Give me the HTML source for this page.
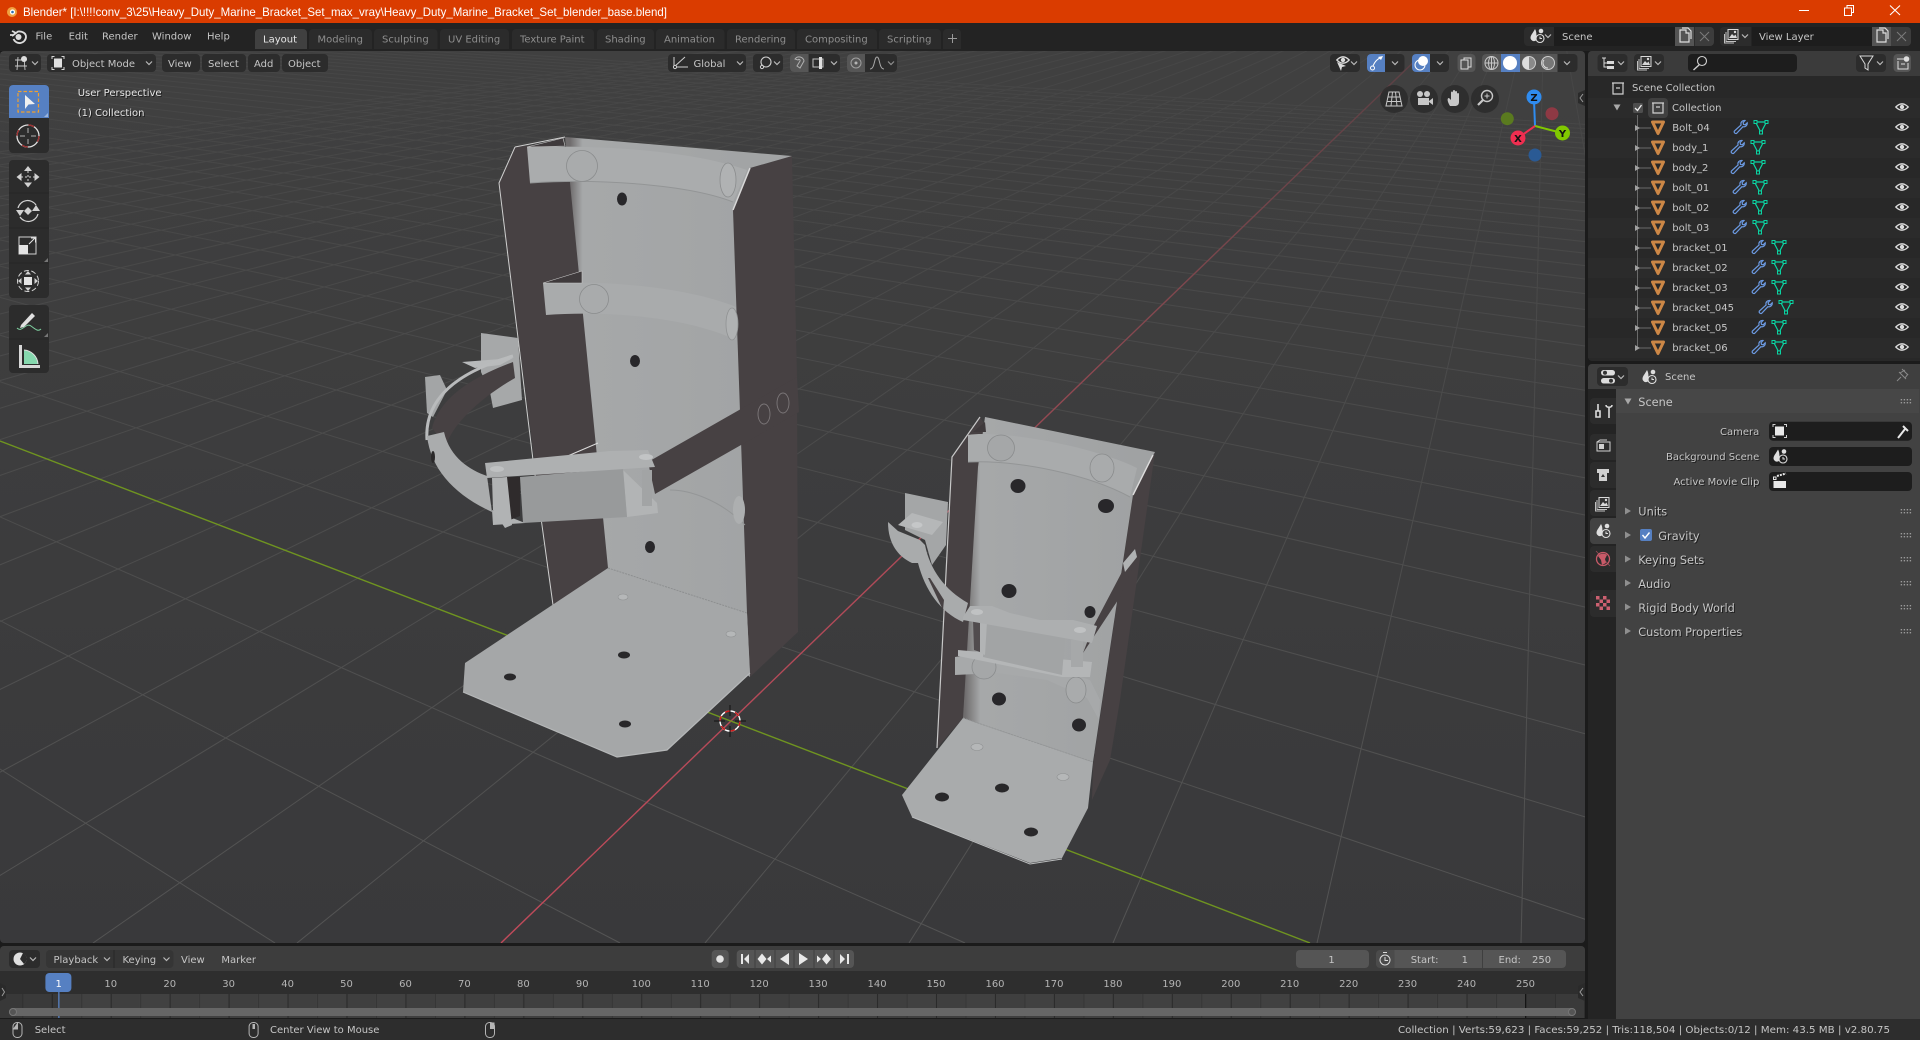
<!DOCTYPE html>
<html><head><meta charset="utf-8"><title>Blender</title>
<style>
html,body{margin:0;padding:0;background:#1b1b1b;width:1920px;height:1040px;overflow:hidden}
svg{display:block;position:absolute;left:0;top:0}
text{font-family:"DejaVu Sans","Liberation Sans",sans-serif;font-size:10px;fill:#c6c6c6;white-space:pre}
.d{fill:#8e8e8e}.w{fill:#e6e6e6}.s{filter:drop-shadow(1px 1px 0 rgba(0,0,0,.55))}.e{text-anchor:end}.m{text-anchor:middle}
.p{font-size:11.3px}
.n{fill:#b4b4b4;text-anchor:middle}
.b{fill:#2c2c2c}
</style></head><body>
<svg width="1920" height="1040" viewBox="0 0 1920 1040" xmlns="http://www.w3.org/2000/svg">
<defs>
<linearGradient id="vb" x1="0" y1="51" x2="0" y2="943" gradientUnits="userSpaceOnUse"><stop offset="0" stop-color="#404040"/><stop offset="1" stop-color="#39393b"/></linearGradient>
<linearGradient id="gl" x1="0" y1="51" x2="0" y2="943" gradientUnits="userSpaceOnUse"><stop offset="0" stop-color="#464646"/><stop offset=".5" stop-color="#4c4c4c"/><stop offset="1" stop-color="#545454"/></linearGradient>
<linearGradient id="rd" x1="1423" y1="53" x2="501" y2="943" gradientUnits="userSpaceOnUse"><stop offset="0" stop-color="#5a4044"/><stop offset=".3" stop-color="#84484f"/><stop offset=".6" stop-color="#b04a58"/><stop offset="1" stop-color="#c04a5a"/></linearGradient>
<linearGradient id="bp" x1="570" y1="0" x2="750" y2="0" gradientUnits="userSpaceOnUse"><stop offset="0" stop-color="#6f6c6d"/><stop offset=".07" stop-color="#a6a8a9"/><stop offset="1" stop-color="#a2a4a5"/></linearGradient>
<linearGradient id="bp2" x1="965" y1="0" x2="1135" y2="0" gradientUnits="userSpaceOnUse"><stop offset="0" stop-color="#6f6c6d"/><stop offset=".09" stop-color="#a6a8a9"/><stop offset="1" stop-color="#a0a2a3"/></linearGradient>
<clipPath id="vc"><rect x="0" y="51" width="1585" height="892" rx="4"/></clipPath>
<pattern id="tk" x="51.75" y="0" width="58.95" height="40" patternUnits="userSpaceOnUse"><rect width="58.95" height="40" fill="#3f3f3f"/><rect x="29" width="29.5" height="40" fill="#414141"/><rect x="0" width="1" height="40" fill="#2a2a2a"/><rect x="29.5" width="1" height="40" fill="#353535"/></pattern>
<g id="ob"><path d="M-5.5 -5.5H5.5L0 6Z" fill="none" stroke="#cc8746" stroke-width="3" stroke-linejoin="round"/></g>
<g id="wr"><path d="M5 -6.5a3.4 3.4 0 0 0 -3.9 4.4L-5.6 4a1.7 1.7 0 0 0 2.3 2.3L2.9 -0.3a3.4 3.4 0 0 0 4.3 -3.9L5.2 -2.2L3.500 -2.6L3.1 -4.4Z" fill="none" stroke="#6c9ae2" stroke-width="1.2"/></g>
<g id="tr"><path d="M-5.5 -5H5.5L0 5.5Z" fill="none" stroke="#0ad6a4" stroke-width="1.2"/><rect x="-7" y="-6.5" width="3" height="3" fill="#282828" stroke="#0ad6a4"/><rect x="4" y="-6.5" width="3" height="3" fill="#282828" stroke="#0ad6a4"/><rect x="-1.5" y="4" width="3" height="3" fill="#282828" stroke="#0ad6a4"/></g>
<g id="ey"><path d="M-6.2 0Q0 -6.4 6.2 0Q0 6.4 -6.2 0Z" fill="none" stroke="#dcdcdc" stroke-width="1.3"/><circle r="2.2" fill="#dcdcdc"/></g>
<path id="ch" d="M-3 -1.5L0 1.5L3 -1.5" fill="none" stroke="#b9b9b9" stroke-width="1.2"/>
<path id="ar" d="M-3 -3.5L3 0L-3 3.5Z" fill="#8f8f8f"/>
<path id="ad" d="M-3.5 -2.5H3.5L0 3.5Z" fill="#a8a8a8"/>
<g id="gr" fill="#9a9a9a"><rect x="0" y="-2" width="1.4" height="1.4"/><rect x="3" y="-2" width="1.4" height="1.4"/><rect x="6" y="-2" width="1.4" height="1.4"/><rect x="9" y="-2" width="1.4" height="1.4"/><rect x="0" y="1" width="1.4" height="1.4"/><rect x="3" y="1" width="1.4" height="1.4"/><rect x="6" y="1" width="1.4" height="1.4"/><rect x="9" y="1" width="1.4" height="1.4"/></g>
<g id="sc"><path d="M-2 -7C-4 -3 -6.5 -1 -6.5 2A3.5 3.5 0 0 0 -1 4.5C-0.6 1 0 -4 -2 -7Z" fill="#dedede"/><circle cx="4" cy="-5" r="2.3" fill="#dedede"/><circle cx="3" cy="2.5" r="4" fill="none" stroke="#dedede" stroke-width="1.1"/><path d="M3 0.5V2.5H5" fill="none" stroke="#dedede"/></g>
<g id="vl"><rect x="-5" y="-6.5" width="10" height="10" fill="#333" stroke="#d8d8d8"/><path d="M-4 2L-1 -2L1 0L2.5 -1.5L4 2Z" fill="#d8d8d8"/><circle cx="2" cy="-4" r="1.2" fill="#d8d8d8"/><path d="M-7 -4V5.500H3M-8.500 -2V7H1" fill="none" stroke="#c0c0c0"/></g>
<g id="cp"><path d="M-4 -6H2V-3H5V6H-4Z" fill="none" stroke="#dedede" stroke-width="1.2"/><path d="M-2 -8H4L7 -5V3" fill="none" stroke="#dedede" stroke-width="1.2"/></g>
<g id="ms"><rect x="-4.500" y="-7.500" width="9" height="15" rx="4" fill="none" stroke="#b5b5b5"/></g>
</defs>

<rect width="1920" height="1040" fill="#1b1b1b"/>
<rect y="23" width="1920" height="28" fill="#232323"/>

<!-- VIEWPORT -->
<g clip-path="url(#vc)">
<rect x="0" y="51" width="1585" height="892" fill="url(#vb)"/>
<path fill="none" stroke="url(#gl)" stroke-width="1" d="M1546 -66L1929 943M1546 -66L1725 943M1546 -66L1521 943M1546 -66L1317 943M1546 -66L1113 943M1546 -66L909 943M1546 -66L705 943M1546 -66L297 943M1546 -66L93 943M1546 -66L-111 943M1546 -66L-315 943M1546 -66L-519 943M1546 -66L-723 943M1546 -66L-927 943M1546 -66L-1131 943M1546 -66L-1335 943M1546 -66L-1539 943M1546 -66L-1743 943M1546 -66L-1947 943M1546 -66L-2151 943M1546 -66L-2355 943M1546 -66L-2559 943M1546 -66L-2763 943M1546 -66L-2967 943M1546 -66L-3171 943M1546 -66L-3375 943M1546 -66L-3579 943M1546 -66L-3783 943M1546 -66L-3987 943M1546 -66L-4191 943M1546 -66L-4395 943M1546 -66L-4599 943M1546 -66L-4803 943M1546 -66L-5007 943M1546 -66L-5211 943M1546 -66L-5415 943M1546 -66L-5619 943
M-1320 -66L275 943M-1320 -66L620 943M-1320 -66L965 943M-1320 -66L1655 943M-1320 -66L2000 943M-1320 -66L2345 943M-1320 -66L2690 943M-1320 -66L3035 943M-1320 -66L3380 943M-1320 -66L3725 943M-1320 -66L4070 943M-1320 -66L4415 943M-1320 -66L4760 943M-1320 -66L5105 943M-1320 -66L5450 943M-1320 -66L5795 943M-1320 -66L6140 943M-1320 -66L6485 943M-1320 -66L6830 943M-1320 -66L7175 943M-1320 -66L7520 943M-1320 -66L7865 943M-1320 -66L8210 943M-1320 -66L8555 943M-1320 -66L8900 943M-1320 -66L9245 943M-1320 -66L9590 943M-1320 -66L9935 943M-1320 -66L10280 943M-1320 -66L10625 943M-1320 -66L10970 943M-1320 -66L11315 943M-1320 -66L11660 943M-1320 -66L12005 943M-1320 -66L12350 943M-1320 -66L12695 943M-1320 -66L13040 943M-1320 -66L13385 943M-1320 -66L13730 943M-1320 -66L14075 943"/>
<path d="M1423 53L501 943" stroke="url(#rd)" stroke-width="1.4" fill="none"/>
<path d="M0 441L1310 943" stroke="#6f9420" stroke-width="1.4" fill="none"/>

<!-- BRACKET 1 -->
<g>
<polygon points="792,156 750,168 733,210 747,613 750,677 798,632 797,377" fill="#474143"/>
<polygon points="515,147 499,183 553,605 608,568 570,183 535,145" fill="#474143"/>
<polygon points="565,137 792,156 750,168 733,210 747,613 750,677 608,568 570,183" fill="url(#bp)"/>
<path d="M515 147L499 183L533 460L553 605" fill="none" stroke="#cfcfcf" stroke-width="1"/>
<path d="M515 147L565 137" fill="none" stroke="#cfcfcf" stroke-width="1"/>
<path d="M750 168L733 210" fill="none" stroke="#d8d8d8" stroke-width="1.5"/>
<polygon points="608,568 747,613 750,673 667,750 617,757 463,692 465,663" fill="#a5a7a8"/>
<path d="M463 692L617 757L667 750L750 673" fill="none" stroke="#b5b7b8" stroke-width="1.2"/>
<path d="M608 568L747 613" fill="none" stroke="#8d8f90" stroke-width="1" stroke-dasharray="2 1"/>
<ellipse cx="510" cy="677" rx="6" ry="3.5" fill="#29282a"/><ellipse cx="624" cy="655" rx="6" ry="3.5" fill="#29282a"/><ellipse cx="625" cy="724" rx="6" ry="3.5" fill="#29282a"/>
<ellipse cx="623" cy="597" rx="5" ry="3" fill="#b5b7b8" stroke="#8f9192" stroke-width=".6"/><ellipse cx="731" cy="634" rx="5" ry="3" fill="#b5b7b8" stroke="#8f9192" stroke-width=".6"/>
<ellipse cx="622" cy="199" rx="5" ry="6.5" fill="#28272a"/><ellipse cx="635" cy="361" rx="5" ry="6" fill="#28272a"/><ellipse cx="650" cy="547" rx="5" ry="6" fill="#28272a"/>
<path d="M527 147C600 145 690 150 747 170L733 202C690 185 600 178 530 183Z" fill="#aaacad"/>
<path d="M527 147L563 138L565 146Z" fill="#3f3a3c" stroke="#c8c8c8" stroke-width=".6"/>
<path d="M530 183C600 178 690 185 733 202" fill="none" stroke="#939596"/>
<ellipse cx="582" cy="166" rx="15.5" ry="15.5" fill="#a9abac" stroke="#8a8c8d" stroke-width=".8"/>
<ellipse cx="728" cy="180" rx="8" ry="17" fill="#b0b2b3" stroke="#8a8c8d" stroke-width=".8"/>
<path d="M543 283C610 280 690 288 736 307L736 340C690 318 610 310 546 315Z" fill="#a9abac"/>
<path d="M543 283L582 271L582 283Z" fill="#3f3a3c" stroke="#c8c8c8" stroke-width=".6"/>
<ellipse cx="594" cy="299" rx="14.5" ry="14.5" fill="#a9abac" stroke="#8a8c8d" stroke-width=".8"/>
<ellipse cx="732" cy="324" rx="6" ry="16" fill="#b0b2b3" stroke="#909293" stroke-width=".8"/>
<path d="M670 490C690 490 720 500 745 525" fill="none" stroke="#949697"/>
<ellipse cx="739" cy="510" rx="6" ry="14" fill="#adafb0"/>
<path d="M563 458L598 443" stroke="#dcdcdc" fill="none"/>
<polygon points="797,377 799,412 655,494 648,462" fill="#474143"/>
<ellipse cx="764" cy="414" rx="6" ry="10" fill="#474143" stroke="#7c7779" stroke-width=".9"/>
<ellipse cx="783" cy="403" rx="6" ry="10" fill="#474143" stroke="#7c7779" stroke-width=".9"/>
<polygon points="481,333 518,338 522,400 493,408 490,392 481,372" fill="#a6a8a9"/>
<path d="M462 362L513 358L500 365L475 368Z" fill="#b8babb"/>
<circle cx="500" cy="375" r="6.5" fill="#a6a8a9" stroke="#86888a" stroke-width=".8"/>
<path d="M425 377L440 375L447 390L433 417L427 413Z" fill="#a3a5a6"/>
<path d="M513 362C470 378 440 398 432 428L446 446C452 425 480 398 515 378Z" fill="#474143"/>
<path d="M513 356C458 372 424 398 427 440" fill="none" stroke="#b9bbbc" stroke-width="3"/>
<path d="M427 436C431 470 455 495 492 512L487 476C470 470 450 458 444 432Z" fill="#aaacad"/>
<ellipse cx="433" cy="457" rx="2" ry="6" fill="#2a2829"/>
<polygon points="492,510 525,523 493,525" fill="#b0b2b3"/>
<polygon points="623,470 657,503 658,513 627,517" fill="#b2b4b5"/>
<rect x="642" y="470" width="10" height="36" fill="#a2a4a5"/>
<polygon points="520,477 623,468 627,517 523,523" fill="#989a9b"/>
<polygon points="507,477 520,477 520,516 510,520" fill="#2f2b2c"/>
<polygon points="492,478 507,477 512,525 505,528 493,510" fill="#b1b3b4"/>
<polygon points="485,463 610,451 648,450 655,467 487,478" fill="#aeb0b1"/>
<ellipse cx="497" cy="469" rx="7" ry="3" fill="#bfc1c2"/>
<ellipse cx="646" cy="457" rx="7" ry="3" fill="#c2c4c5"/>
</g>

<!-- BRACKET 2 -->
<g>
<polygon points="1155,452 1133,495 1093,765 1092,800 1110,760 1120,700" fill="#474143"/>
<polygon points="980,417 952,457 937,748 963,718 978,467 985,425" fill="#474143"/>
<polygon points="985,417 1155,452 1133,495 1093,762 963,718 978,467" fill="url(#bp2)"/>
<path d="M980 417L952 457L937 748" fill="none" stroke="#c8c8c8" stroke-width="1.2"/>
<path d="M1153 455L1133 495" stroke="#dcdcdc" fill="none" stroke-width="1.4"/>
<polygon points="963,718 1093,762 1088,808 1062,858 1030,863 912,817 902,795" fill="#a9abac"/>
<path d="M912 817L1030 864L1062 859" fill="none" stroke="#babcbd" stroke-width="1"/>
<path d="M963 718L1093 762" stroke="#949697" fill="none" stroke-dasharray="2 1"/>
<ellipse cx="1018" cy="486" rx="7.5" ry="7" fill="#28272a"/><ellipse cx="1106" cy="506" rx="8" ry="7" fill="#28272a"/><ellipse cx="1009" cy="591" rx="7.5" ry="7" fill="#28272a"/><ellipse cx="1090" cy="612" rx="5.5" ry="6" fill="#28272a"/>
<ellipse cx="999" cy="699" rx="7" ry="6.5" fill="#28272a"/><ellipse cx="1079" cy="725" rx="7" ry="6.5" fill="#28272a"/>
<ellipse cx="942" cy="797" rx="7" ry="4.5" fill="#29282a"/><ellipse cx="1002" cy="788" rx="7" ry="4.5" fill="#29282a"/><ellipse cx="1031" cy="832" rx="7" ry="4.5" fill="#29282a"/>
<ellipse cx="977" cy="747" rx="6" ry="3.5" fill="#b5b7b8" stroke="#8f9192" stroke-width=".6"/><ellipse cx="1063" cy="777" rx="6" ry="3.5" fill="#b5b7b8" stroke="#8f9192" stroke-width=".6"/>
<path d="M968 435C1000 430 1090 445 1137 468L1130 497C1090 475 1020 460 968 462Z" fill="#a9abac"/>
<path d="M973 432L985 422L986 432Z" fill="#3f3a3c"/>
<path d="M968 462C1020 460 1090 475 1130 497" fill="none" stroke="#939596"/>
<ellipse cx="1001" cy="448" rx="13.5" ry="13" fill="#a5a7a8" stroke="#8a8c8d" stroke-width=".8"/>
<ellipse cx="1102" cy="468" rx="12" ry="14" fill="#a9abac" stroke="#8a8c8d" stroke-width=".8"/>
<!-- lower strap -->
<polygon points="955,657 1000,650 1090,680 1100,700 1099,720 1087,698 1047,680 997,673 955,675" fill="#a7a9aa"/>
<circle cx="984" cy="667" r="12" fill="#a5a7a8" stroke="#8a8c8d" stroke-width=".8"/>
<ellipse cx="1076" cy="690" rx="10" ry="13" fill="#a9abac" stroke="#8a8c8d" stroke-width=".8"/>
<!-- band -->
<polygon points="1137,557 1120,597 1083,653 1093,627 1123,570" fill="#474143"/>
<polygon points="1123,563 1135,549 1137,557 1125,572" fill="#b0b2b3"/>
<!-- tab + arc -->
<polygon points="905,493 948,502 946,545 932,565 925,540 905,530" fill="#a4a6a7"/>
<path d="M888 522C888 540 895 555 912 563L918 563C925 590 940 612 963 622L968 603C945 590 930 570 925 545L920 540L898 531Z" fill="#a9abac"/>
<path d="M928 578L943 610L944 600L930 578Z" fill="#474143"/>
<polygon points="898,525 912,513 943,522 932,535" fill="#b5b7b8"/>
<ellipse cx="917" cy="525" rx="5.5" ry="3" fill="#c5c7c8"/>
<!-- hinge -->
<polygon points="958,650 1092,662 1090,677 1062,677 958,656" fill="#b4b6b7"/>
<rect x="1071" y="640" width="12" height="27" fill="#a6a8a9"/>
<polygon points="986,623 1065,638 1062,675 983,657" fill="#a2a4a5"/>
<polygon points="973,620 980,620 980,652 974,650" fill="#514c4e"/>
<polygon points="980,620 987,622 985,655 980,653" fill="#b2b4b5"/>
<polygon points="963,617 970,606 992,606 1010,613 1040,620 1073,620 1097,626 1092,643 963,620" fill="#adafb0"/>
<ellipse cx="977" cy="612" rx="6" ry="3" fill="#c0c2c3"/><ellipse cx="1080" cy="630" rx="6" ry="3" fill="#c0c2c3"/>
</g>

<circle cx="730" cy="721" r="10" fill="none" stroke="#fff" stroke-width="1.4"/>
<circle cx="730" cy="721" r="10" fill="none" stroke="#d01818" stroke-width="1.4" stroke-dasharray="5.2 5.2"/>
<path d="M730 705V716M730 726V737M714 721H725M735 721H746" stroke="#111" stroke-width="1" fill="none"/>
</g>

<!-- viewport header -->
<rect x="9" y="54" width="32" height="18" rx="4" class="b"/>
<path d="M15 60H27M15 66H27M18 57L17 70M24 57L25 70" stroke="#c8c8c8" fill="none" stroke-width=".9"/><circle cx="24" cy="59" r="3" fill="#dcdcdc"/><use href="#ch" x="35" y="63"/>
<rect x="47" y="54" width="109" height="18" rx="4" class="b"/>
<path d="M52 59V56.5H54.5M61.5 56.5H64V59M64 67V69.5H61.5M54.5 69.5H52V67" fill="none" stroke="#d4d4d4"/><rect x="54" y="58.5" width="8" height="9" fill="#e0e0e0"/>
<text x="72" y="67">Object Mode</text><use href="#ch" x="149" y="63"/>
<rect x="162" y="54" width="38" height="18" rx="4" class="b"/><text x="168" y="67">View</text>
<rect x="202" y="54" width="44" height="18" rx="4" class="b"/><text x="208" y="67">Select</text>
<rect x="248" y="54" width="32" height="18" rx="4" class="b"/><text x="254" y="67">Add</text>
<rect x="282" y="54" width="46" height="18" rx="4" class="b"/><text x="288" y="67">Object</text>

<rect x="668" y="54" width="78" height="18" rx="4" class="b"/>
<path d="M674 57V67H688M674 67L685 57" fill="none" stroke="#d0d0d0"/><circle cx="675" cy="67" r="1.6" fill="#2c2c2c" stroke="#d0d0d0"/>
<text x="693.5" y="67">Global</text><use href="#ch" x="740" y="63"/>
<rect x="753" y="54" width="30" height="18" rx="4" class="b"/>
<circle cx="766" cy="62" r="5" fill="none" stroke="#d0d0d0" stroke-width="1.1"/><circle cx="762" cy="67" r="1.6" fill="#2c2c2c" stroke="#d0d0d0"/><use href="#ch" x="777" y="63"/>
<rect x="790" y="54" width="50" height="18" rx="4" class="b"/><path d="M794 54H808.6V72H794a4 4 0 0 1 -4 -4V58a4 4 0 0 1 4 -4Z" fill="#565656"/>
<path d="M795 59a5 5 0 0 1 9 2L800 68L797 66L800 61a1 1 0 0 0 -2 -1Z" fill="none" stroke="#b0b0b0"/>
<rect x="813" y="59" width="10" height="8" fill="none" stroke="#c0c0c0"/><rect x="819" y="57" width="3" height="12" fill="#e0e0e0"/><use href="#ch" x="834" y="63"/>
<rect x="847" y="54" width="50" height="18" rx="4" class="b"/><path d="M851 54H865V72H851a4 4 0 0 1 -4 -4V58a4 4 0 0 1 4 -4Z" fill="#565656"/>
<circle cx="856" cy="63" r="5" fill="none" stroke="#a0a0a0"/><circle cx="856" cy="63" r="1.5" fill="#b5b5b5"/>
<path d="M870 69C875 69 874 57 877 57C880 57 879 69 884 69" fill="none" stroke="#a8a8a8"/><use href="#ch" x="891" y="63" opacity=".7"/>

<rect x="1330" y="54" width="30" height="18" rx="4" class="b"/>
<use href="#ey" x="1343" y="60"/><path d="M1337 62L1346 66L1342 67L1341 71Z" fill="#dcdcdc"/><use href="#ch" x="1354" y="63"/>
<rect x="1367" y="54" width="37.5" height="18" rx="4" class="b"/><path d="M1371 54H1385V72H1371a4 4 0 0 1 -4 -4V58a4 4 0 0 1 4 -4Z" fill="#5680c2"/>
<path d="M1372 69C1374 62 1377 59 1382 57" stroke="#fff" fill="none"/><circle cx="1372.5" cy="68" r="2" fill="#5680c2" stroke="#fff"/><path d="M1383 56L1381 60L1378 57Z" fill="#fff"/><use href="#ch" x="1395" y="63"/>
<rect x="1412" y="54" width="37" height="18" rx="4" class="b"/><path d="M1416 54H1430V72H1416a4 4 0 0 1 -4 -4V58a4 4 0 0 1 4 -4Z" fill="#5680c2"/>
<circle cx="1423" cy="61" r="5" fill="#fff"/><circle cx="1420" cy="65" r="5" fill="none" stroke="#fff"/><use href="#ch" x="1440" y="63"/>
<rect x="1457.5" y="54" width="18" height="18" rx="4" fill="#555"/><rect x="1464" y="58" width="7" height="9" fill="none" stroke="#ddd"/><rect x="1461" y="60" width="7" height="9" fill="#555" stroke="#ddd"/>
<rect x="1482" y="54" width="95.5" height="18" rx="4" class="b"/><path d="M1486 54H1501V72H1486a4 4 0 0 1 -4 -4V58a4 4 0 0 1 4 -4Z" fill="#565656"/><rect x="1501" y="54" width="19" height="18" fill="#5680c2"/><rect x="1520" y="54" width="18" height="18" fill="#565656"/><rect x="1538" y="54" width="19.5" height="18" fill="#565656"/>
<circle cx="1491.5" cy="63" r="6.5" fill="none" stroke="#c8c8c8"/><path d="M1485 63H1498M1491.5 56.5V69.5" stroke="#c8c8c8" fill="none"/><ellipse cx="1491.5" cy="63" rx="3" ry="6.5" fill="none" stroke="#c8c8c8"/>
<circle cx="1510" cy="63" r="7" fill="#fff"/>
<circle cx="1529" cy="63" r="6.5" fill="#8a8a8a" stroke="#ccc"/><path d="M1529 56.5A6.5 6.5 0 0 0 1529 69.5Z" fill="#ddd"/>
<circle cx="1548" cy="63" r="6.5" fill="#777" stroke="#ccc"/><path d="M1544 60A5 5 0 0 0 1548 68" stroke="#ddd" fill="none"/>
<use href="#ch" x="1567" y="63"/>

<g fill="#2b2b2b" fill-opacity=".85"><ellipse cx="1394" cy="99" rx="14" ry="14"/><ellipse cx="1424" cy="99" rx="14" ry="14"/><ellipse cx="1455" cy="99" rx="14" ry="14"/><ellipse cx="1485" cy="99" rx="14" ry="14"/></g>
<path d="M1389 92H1399L1402 106H1386ZM1392.5 92L1391 106M1395.5 92L1397 106M1388 97H1400M1387 101.5H1401" fill="none" stroke="#c8c8c8"/>
<circle cx="1420" cy="94" r="3" fill="#c8c8c8"/><circle cx="1427" cy="94" r="3" fill="#c8c8c8"/><rect x="1418" y="98" width="11" height="7" fill="#c8c8c8"/><path d="M1429 101L1433 98V105L1429 102Z" fill="#c8c8c8"/>
<path d="M1450 106C1447 101 1447 98 1449 98L1451 100V92.5a1 1 0 0 1 2 0V98V91a1 1 0 0 1 2 0V98V92a1 1 0 0 1 2 0V98V94a1 1 0 0 1 2 0V102C1459 105 1457 106 1455 106Z" fill="#c8c8c8"/>
<circle cx="1487" cy="96" r="5.5" fill="none" stroke="#c8c8c8" stroke-width="1.4"/><path d="M1483 100L1478 105" stroke="#c8c8c8" stroke-width="2.2"/><path d="M1484.5 96H1489.5M1487 93.5V98.5" stroke="#c8c8c8"/>

<circle cx="1552" cy="113.7" r="6.5" fill="#8e3944"/><circle cx="1507.3" cy="118.7" r="6.5" fill="#5a7a1f"/><circle cx="1535" cy="155" r="6.5" fill="#2a5a94"/>
<path d="M1535 126L1534 100" stroke="#2f8cf0" stroke-width="2" fill="none"/><path d="M1535 126L1562 133" stroke="#80c800" stroke-width="2" fill="none"/><path d="M1535 126L1518 138" stroke="#ef2e50" stroke-width="2" fill="none"/>
<circle cx="1534" cy="97" r="7.5" fill="#2f8cf0"/><circle cx="1562.5" cy="133" r="7.5" fill="#80c800"/><circle cx="1518" cy="138" r="7.5" fill="#ef2e50"/>
<text x="1534" y="101" class="m" style="fill:#111;font-weight:bold">Z</text><text x="1562.5" y="137" class="m" style="fill:#111;font-weight:bold">Y</text><text x="1518" y="142" class="m" style="fill:#111;font-weight:bold">X</text>
<path d="M1585 90L1578 93V103L1585 106Z" fill="#2a2a2a"/><path d="M1583 94L1580 98L1583 102" stroke="#9a9a9a" fill="none"/>

<!-- toolbar -->
<rect x="9" y="85" width="40" height="68" rx="4" fill="#2c2c2c"/>
<path d="M13 85H45a4 4 0 0 1 4 4V118H9V89a4 4 0 0 1 4 -4Z" fill="#5680c2"/>
<rect x="18" y="91.5" width="20.5" height="20.5" fill="none" stroke="#f0a030" stroke-width="1.2" stroke-dasharray="3.5 2"/>
<path d="M25 95L35 104L28.500 104.500L25 109Z" fill="#f0f0f0"/><path d="M48 113V117H44Z" fill="#9ab4dc"/>
<circle cx="28" cy="136" r="11" fill="none" stroke="#e0e0e0" stroke-width="1.3"/><circle cx="28" cy="136" r="11" fill="none" stroke="#a03030" stroke-width="1.3" stroke-dasharray="6 11.3"/>
<path d="M28 128V133M28 139V144M20 136H25M31 136H36" stroke="#b0b0b0" fill="none"/>
<rect x="9" y="160" width="40" height="138" rx="4" fill="#2c2c2c"/>
<path d="M9 193H49M9 228H49M9 263H49" stroke="#262626"/>
<g fill="#d2d2d2"><path d="M28 166L32 171H24ZM28 187.500L24 182.500H32ZM16.500 177L21.500 173V181ZM39.500 177L34.500 173V181Z"/></g><path d="M28 171V182.500M21 177H35" stroke="#d2d2d2" stroke-dasharray="2 2"/>
<path d="M18 208A10 10 0 0 1 36 205M38 214A10 10 0 0 1 20 217" fill="none" stroke="#d2d2d2" stroke-width="1.2"/><path d="M28 207L32 211L28 215L24 211Z" fill="#d2d2d2"/><path d="M16 210L24 210L20 216ZM32 211L40 211L36 205Z" fill="#d2d2d2"/>
<rect x="19" y="237" width="17" height="17" fill="none" stroke="#d2d2d2"/><rect x="19" y="245" width="9" height="9" fill="#e4e4e4"/><path d="M29 244L35 238M31 238H35.500V242.500" stroke="#e4e4e4" fill="none"/><path d="M48 258V262H44Z" fill="#777"/>
<circle cx="28" cy="281" r="10.500" fill="none" stroke="#d2d2d2" stroke-dasharray="5 2.500"/><rect x="24" y="277" width="8" height="8" fill="#e4e4e4"/><path d="M28 271L31 274.500H25ZM28 291L25 287.500H31ZM18 281L21.500 278V284ZM38 281L34.500 278V284Z" fill="#d2d2d2"/>
<rect x="9" y="305" width="40" height="68" rx="4" fill="#2c2c2c"/><path d="M9 339H49" stroke="#262626"/>
<path d="M21 325L32 313L35 316L24 327L20 328Z" fill="#e0e0e0"/><path d="M17 328C22 333 26 322 31 326C35 329 38 332 41 329" fill="none" stroke="#7fd0a0"/><path d="M48 333V337H44Z" fill="#777"/>
<path d="M19 345H22V365H40V368H19Z" fill="#d8d8d8"/><path d="M24 350A15 15 0 0 1 38 364H24Z" fill="#86d8ae"/><path d="M24 350A15 15 0 0 1 38 364" fill="none" stroke="#e0e0e0"/>
<text x="77.7" y="96" class="s w">User Perspective</text>
<text x="77.7" y="116" class="s w">(1) Collection</text>

<!-- TITLE BAR -->
<rect width="1920" height="23" fill="#da3c00"/>
<circle cx="12" cy="12" r="5" fill="#f0a040"/><circle cx="12.500" cy="12" r="2.600" fill="#fff"/><circle cx="12.500" cy="12" r="1.300" fill="#2a6fb0"/>
<text x="23" y="16" style="font-family:'Liberation Sans',sans-serif;font-size:12px;fill:#fff" textLength="644" lengthAdjust="spacingAndGlyphs">Blender* [I:\!!!!conv_3\25\Heavy_Duty_Marine_Bracket_Set_max_vray\Heavy_Duty_Marine_Bracket_Set_blender_base.blend]</text>
<path d="M1799 10.500H1809" stroke="#fff"/><rect x="1844.500" y="8" width="7" height="7.500" fill="none" stroke="#fff"/><path d="M1847 8V5.500H1853.500V12.500H1851.500" fill="none" stroke="#fff"/><path d="M1890 5.500L1900 15M1900 5.500L1890 15" stroke="#fff" stroke-width="1.100"/>

<!-- TOPBAR -->
<circle cx="18.500" cy="37" r="3" fill="#ddd"/><path d="M12 36L18 31.500C22 31 26 33 26 37A6.500 6.500 0 0 1 13.500 39M14 35H10M16 33L12 31" fill="none" stroke="#ddd" stroke-width="1.800"/>
<text x="35.500" y="39.500">File</text><text x="68.600" y="39.500">Edit</text><text x="102" y="39.500">Render</text><text x="152" y="39.500">Window</text><text x="207" y="39.500">Help</text>
<g fill="#2b2b2b">
<path d="M309 33a4 4 0 0 1 4 -4H368a4 4 0 0 1 4 4V49H309Z"/><path d="M374 33a4 4 0 0 1 4 -4H433.500a4 4 0 0 1 4 4V49H374Z"/><path d="M440 33a4 4 0 0 1 4 -4H505a4 4 0 0 1 4 4V49H440Z"/><path d="M512 33a4 4 0 0 1 4 -4H590a4 4 0 0 1 4 4V49H512Z"/><path d="M597 33a4 4 0 0 1 4 -4H650a4 4 0 0 1 4 4V49H597Z"/><path d="M656 33a4 4 0 0 1 4 -4H720.500a4 4 0 0 1 4 4V49H656Z"/><path d="M727 33a4 4 0 0 1 4 -4H791a4 4 0 0 1 4 4V49H727Z"/><path d="M797 33a4 4 0 0 1 4 -4H873a4 4 0 0 1 4 4V49H797Z"/><path d="M879 33a4 4 0 0 1 4 -4H937a4 4 0 0 1 4 4V49H879Z"/><path d="M943 33a4 4 0 0 1 4 -4H957a4 4 0 0 1 4 4V49H943Z"/>
</g>
<path d="M255 33a4 4 0 0 1 4 -4H303a4 4 0 0 1 4 4V49H255Z" fill="#404040"/>
<text x="263" y="42.500" class="w">Layout</text><text x="317.500" y="42.500" class="d">Modeling</text><text x="382" y="42.500" class="d">Sculpting</text><text x="448" y="42.500" class="d">UV Editing</text><text x="520" y="42.500" class="d">Texture Paint</text><text x="605" y="42.500" class="d">Shading</text><text x="664" y="42.500" class="d">Animation</text><text x="735" y="42.500" class="d">Rendering</text><text x="805" y="42.500" class="d">Compositing</text><text x="887" y="42.500" class="d">Scripting</text>
<path d="M948 38.500H957M952.500 34V43" stroke="#9a9a9a" fill="none"/>
<rect x="1524" y="27" width="190" height="19" rx="4" fill="#2c2c2c"/><rect x="1554" y="27" width="121" height="19" fill="#1d1d1d"/><rect x="1675" y="27" width="19" height="19" fill="#545454"/><path d="M1695 27H1710a4 4 0 0 1 4 4V42a4 4 0 0 1 -4 4H1695Z" fill="#3c3c3c"/>
<use href="#sc" x="1537" y="36"/><use href="#ch" x="1548" y="36"/><text x="1562" y="40">Scene</text><use href="#cp" x="1684" y="36"/><path d="M1700 32L1709 41M1709 32L1700 41" stroke="#7b7b7b"/>
<rect x="1720" y="27" width="191" height="19" rx="4" fill="#2c2c2c"/><rect x="1751.500" y="27" width="120.500" height="19" fill="#1d1d1d"/><rect x="1872" y="27" width="19" height="19" fill="#545454"/><path d="M1891 27H1907a4 4 0 0 1 4 4V42a4 4 0 0 1 -4 4H1891Z" fill="#3c3c3c"/>
<use href="#vl" x="1733" y="36"/><use href="#ch" x="1745" y="36"/><text x="1759" y="40">View Layer</text><use href="#cp" x="1881" y="36"/><path d="M1897 32L1906 41M1906 32L1897 41" stroke="#7b7b7b"/>

<!-- OUTLINER -->
<path d="M1592 51H1920V361H1592a4 4 0 0 1 -4 -4V55a4 4 0 0 1 4 -4Z" fill="#282828"/>
<path d="M1592 51H1920V76H1588V55a4 4 0 0 1 4 -4Z" fill="#3b3b3b"/>
<rect x="1597.500" y="54" width="30" height="18" rx="4" class="b"/>
<path d="M1602 58H1606M1604 58V67H1607M1604 63H1607" stroke="#d8d8d8" fill="none"/><rect x="1607" y="61" width="7" height="3" fill="#d8d8d8"/><rect x="1607" y="66" width="7" height="3" fill="#d8d8d8"/><use href="#ch" x="1621" y="63"/>
<rect x="1634" y="54" width="30" height="18" rx="4" class="b"/><use href="#vl" x="1646" y="63"/><use href="#ch" x="1658" y="63"/>
<rect x="1688" y="54" width="109" height="18" rx="4" fill="#1d1d1d"/><circle cx="1702" cy="61" r="4.500" fill="none" stroke="#d0d0d0" stroke-width="1.100"/><path d="M1699 65L1693.500 70" stroke="#d0d0d0" stroke-width="1.400"/>
<rect x="1856" y="54" width="30" height="18" rx="4" class="b"/><path d="M1860 56H1873L1868 64V70L1865 68V64Z" fill="none" stroke="#d8d8d8"/><use href="#ch" x="1880" y="63"/>
<rect x="1893.500" y="54" width="17.500" height="18" rx="4" fill="#555"/><path d="M1897 59H1904M1898 61V69H1908V63M1901 64H1905" fill="none" stroke="#ddd"/><circle cx="1906.500" cy="59" r="2.800" fill="#ddd"/>
<rect x="1588" y="98" width="332" height="20" fill="#2b2b2b"/><rect x="1588" y="138" width="332" height="20" fill="#2b2b2b"/><rect x="1588" y="178" width="332" height="20" fill="#2b2b2b"/><rect x="1588" y="218" width="332" height="20" fill="#2b2b2b"/><rect x="1588" y="258" width="332" height="20" fill="#2b2b2b"/><rect x="1588" y="298" width="332" height="20" fill="#2b2b2b"/><rect x="1588" y="338" width="332" height="20" fill="#2b2b2b"/>
<path d="M1612 83H1624M1613 83V94H1623V83M1616 88H1620" fill="none" stroke="#d0d0d0" stroke-width="1.200"/>
<text x="1632" y="91">Scene Collection</text>
<use href="#ad" x="1617" y="107"/><rect x="1633" y="103" width="10" height="10" rx="1.500" fill="#4e4e4e"/><path d="M1635 108L1637.500 110.500L1641.500 105" stroke="#eee" fill="none" stroke-width="1.300"/>
<rect x="1648" y="98" width="20" height="20" rx="4" fill="#404040"/><path d="M1652 103H1664M1653 103V113H1663V103M1656 107H1660" fill="none" stroke="#d0d0d0" stroke-width="1.200"/>
<text x="1672" y="111">Collection</text><use href="#ey" x="1902" y="107"/>
<path d="M1637.500 115V348" stroke="#6a6a6a"/>
<g stroke="#6a6a6a"><path d="M1637 128H1651M1637 148H1651M1637 168H1651M1637 188H1651M1637 208H1651M1637 228H1651M1637 248H1651M1637 268H1651M1637 288H1651M1637 308H1651M1637 328H1651M1637 348H1651"/></g>
<g fill="#a0a0a0"><path d="M1635 125V131L1640 128ZM1635 145V151L1640 148ZM1635 165V171L1640 168ZM1635 185V191L1640 188ZM1635 205V211L1640 208ZM1635 225V231L1640 228ZM1635 245V251L1640 248ZM1635 265V271L1640 268ZM1635 285V291L1640 288ZM1635 305V311L1640 308ZM1635 325V331L1640 328ZM1635 345V351L1640 348Z"/></g>
<use href="#ob" x="1658" y="127.500"/><use href="#ob" x="1658" y="147.500"/><use href="#ob" x="1658" y="167.500"/><use href="#ob" x="1658" y="187.500"/><use href="#ob" x="1658" y="207.500"/><use href="#ob" x="1658" y="227.500"/><use href="#ob" x="1658" y="247.500"/><use href="#ob" x="1658" y="267.500"/><use href="#ob" x="1658" y="287.500"/><use href="#ob" x="1658" y="307.500"/><use href="#ob" x="1658" y="327.500"/><use href="#ob" x="1658" y="347.500"/>
<text x="1672.300" y="131">Bolt_04</text><text x="1672.300" y="151">body_1</text><text x="1672.300" y="171">body_2</text><text x="1672.300" y="191">bolt_01</text><text x="1672.300" y="211">bolt_02</text><text x="1672.300" y="231">bolt_03</text><text x="1672.300" y="251">bracket_01</text><text x="1672.300" y="271">bracket_02</text><text x="1672.300" y="291">bracket_03</text><text x="1672.300" y="311">bracket_045</text><text x="1672.300" y="331">bracket_05</text><text x="1672.300" y="351">bracket_06</text>
<use href="#wr" x="1740" y="127"/><use href="#tr" x="1761" y="127"/>
<use href="#wr" x="1737" y="147"/><use href="#tr" x="1758" y="147"/>
<use href="#wr" x="1737" y="167"/><use href="#tr" x="1758" y="167"/>
<use href="#wr" x="1739" y="187"/><use href="#tr" x="1760" y="187"/>
<use href="#wr" x="1739" y="207"/><use href="#tr" x="1760" y="207"/>
<use href="#wr" x="1739" y="227"/><use href="#tr" x="1760" y="227"/>
<use href="#wr" x="1758" y="247"/><use href="#tr" x="1779" y="247"/>
<use href="#wr" x="1758" y="267"/><use href="#tr" x="1779" y="267"/>
<use href="#wr" x="1758" y="287"/><use href="#tr" x="1779" y="287"/>
<use href="#wr" x="1765" y="307"/><use href="#tr" x="1786" y="307"/>
<use href="#wr" x="1758" y="327"/><use href="#tr" x="1779" y="327"/>
<use href="#wr" x="1758" y="347"/><use href="#tr" x="1779" y="347"/>
<use href="#ey" x="1902" y="127"/><use href="#ey" x="1902" y="147"/><use href="#ey" x="1902" y="167"/><use href="#ey" x="1902" y="187"/><use href="#ey" x="1902" y="207"/><use href="#ey" x="1902" y="227"/><use href="#ey" x="1902" y="247"/><use href="#ey" x="1902" y="267"/><use href="#ey" x="1902" y="287"/><use href="#ey" x="1902" y="307"/><use href="#ey" x="1902" y="327"/><use href="#ey" x="1902" y="347"/>

<!-- PROPERTIES -->
<path d="M1592 364H1920V1019H1588V368a4 4 0 0 1 4 -4Z" fill="#242424"/>
<path d="M1592 364H1920V389H1588V368a4 4 0 0 1 4 -4Z" fill="#3f3f3f"/>
<rect x="1597" y="367" width="31" height="19" rx="4" class="b"/><rect x="1601" y="370" width="14" height="5.500" rx="2.700" fill="#ddd"/><rect x="1601" y="378" width="14" height="5.500" rx="2.700" fill="#ddd"/><circle cx="1605" cy="372.700" r="2" fill="#333"/><circle cx="1611" cy="380.700" r="2" fill="#333"/><use href="#ch" x="1621" y="377"/>
<use href="#sc" x="1649" y="377"/><text x="1665" y="380">Scene</text>
<path d="M1897 381L1901 377M1899 372L1906 379M1902 369L1908 375M1900 373L1905 370M1905 378L1908 374" stroke="#8a8a8a" fill="none"/>
<rect x="1616" y="389" width="304" height="630" fill="#424242"/>
<rect x="1616" y="389" width="303" height="24" fill="#474747"/>
<g fill="#2c2c2c"><path d="M1594 398H1616V424H1594a4 4 0 0 1 -4 -4V402a4 4 0 0 1 4 -4Z"/><path d="M1594 434H1616V460H1594a4 4 0 0 1 -4 -4V438a4 4 0 0 1 4 -4Z"/><path d="M1594 462H1616V488H1594a4 4 0 0 1 -4 -4V466a4 4 0 0 1 4 -4Z"/><path d="M1594 490H1616V516H1594a4 4 0 0 1 -4 -4V494a4 4 0 0 1 4 -4Z"/><path d="M1594 546H1616V572H1594a4 4 0 0 1 -4 -4V550a4 4 0 0 1 4 -4Z"/><path d="M1594 590H1616V617H1594a4 4 0 0 1 -4 -4V594a4 4 0 0 1 4 -4Z"/></g>
<path d="M1594 518H1616V544H1594a4 4 0 0 1 -4 -4V522a4 4 0 0 1 4 -4Z" fill="#424242"/>
<path d="M1598 404V411M1596 411H1600V417H1596ZM1606 405C1606 408 1612 408 1612 405M1609 408V418" stroke="#dcdcdc" stroke-width="1.600" fill="none"/>
<rect x="1597" y="442" width="13" height="9" fill="none" stroke="#cfcfcf"/><rect x="1599" y="444" width="5" height="5" fill="#cfcfcf"/><path d="M1597 442L1600 440H1607" stroke="#cfcfcf" fill="none"/>
<path d="M1597 469H1609V473H1607V481H1599V473H1597Z" fill="#cfcfcf"/><path d="M1601 477L1603 474L1605 477Z" fill="#333"/>
<use href="#vl" x="1604" y="504"/>
<use href="#sc" x="1603" y="531"/>
<circle cx="1603" cy="559" r="6.500" fill="#2c2c2c" stroke="#c85a68" stroke-width="1.300"/><path d="M1598 556C1600 553 1605 553 1607 555L1605 559L1606 563L1602 565L1601 560Z" fill="#c85a68"/><path d="M1596 551L1610 566" stroke="#c85a68" stroke-width=".8" opacity=".7"/>
<rect x="1596" y="596" width="14" height="14" fill="#2c2c2c"/><path d="M1596 596h3.500v3.500h-3.500zM1603 596h3.500v3.500h-3.500zM1599.500 599.500h3.500v3.500h-3.500zM1606.500 599.500h3.500v3.500h-3.500zM1596 603h3.500v3.500h-3.500zM1603 603h3.500v3.500h-3.500zM1599.500 606.500h3.500v3.500h-3.500zM1606.500 606.500h3.500v3.500h-3.500z" fill="#cc6070"/>
<use href="#ad" x="1628" y="401"/><text x="1638.300" y="406" class="p">Scene</text><use href="#gr" x="1900.700" y="401"/>
<text x="1759.300" y="435" class="e s">Camera</text><rect x="1769" y="421.700" width="143" height="19" rx="4" fill="#1d1d1d"/><rect x="1775" y="426.500" width="9" height="9" fill="#e8e8e8"/><path d="M1773 427V424.500H1775.500M1784 424.500H1786.500V427M1786.500 435V437.500H1784M1775.500 437.500H1773V435" stroke="#d0d0d0" fill="none"/><path d="M1898 438L1905 429M1903 426L1908 431" stroke="#e8e8e8" stroke-width="2" fill="none"/>
<text x="1759.300" y="460" class="e s">Background Scene</text><rect x="1769" y="447" width="143" height="19" rx="4" fill="#1d1d1d"/><use href="#sc" x="1780" y="456.500"/>
<text x="1759.300" y="485" class="e s">Active Movie Clip</text><rect x="1769" y="472" width="143" height="19" rx="4" fill="#1d1d1d"/><path d="M1773.500 481H1786V488H1773.500Z" fill="#e8e8e8"/><path d="M1773.500 477H1776V479.500H1773.500Z" fill="none" stroke="#e8e8e8"/><path d="M1777 476L1786 473.500" stroke="#e8e8e8" stroke-width="2" stroke-dasharray="2 1"/>
<use href="#ar" x="1628" y="511"/><text x="1638.300" y="515.700" class="p s">Units</text><use href="#gr" x="1900.700" y="511"/>
<use href="#ar" x="1628" y="535"/><rect x="1640" y="529" width="12" height="12" rx="2" fill="#5680c2"/><path d="M1642.500 535L1645 538L1649.500 532.500" stroke="#fff" stroke-width="1.400" fill="none"/><text x="1658.300" y="540" class="p s">Gravity</text><use href="#gr" x="1900.700" y="535"/>
<use href="#ar" x="1628" y="559"/><text x="1638.300" y="564" class="p s">Keying Sets</text><use href="#gr" x="1900.700" y="559"/>
<use href="#ar" x="1628" y="583"/><text x="1638.300" y="588" class="p s">Audio</text><use href="#gr" x="1900.700" y="583"/>
<use href="#ar" x="1628" y="607"/><text x="1638.300" y="612" class="p s">Rigid Body World</text><use href="#gr" x="1900.700" y="607"/>
<use href="#ar" x="1628" y="631"/><text x="1638.300" y="636" class="p s">Custom Properties</text><use href="#gr" x="1900.700" y="631"/>

<!-- TIMELINE -->
<path d="M4 946H1581a4 4 0 0 1 4 4V1018H0V950a4 4 0 0 1 4 -4Z" fill="#2e2e2e"/>
<path d="M4 946H1581a4 4 0 0 1 4 4V971H0V950a4 4 0 0 1 4 -4Z" fill="#3d3d3d"/>
<rect x="0" y="994" width="1585" height="24" fill="url(#tk)"/>
<rect x="0" y="994" width="58" height="24" fill="#000" opacity=".1"/><rect x="1525.500" y="994" width="60" height="24" fill="#000" opacity=".1"/>
<rect x="1525" y="994" width="1" height="24" fill="#151515"/>
<rect x="9" y="950" width="31" height="18" rx="4" class="b"/><circle cx="20" cy="959" r="6.500" fill="#e0e0e0"/><path d="M20 959L23 953A6.500 6.500 0 0 1 24 964Z" fill="#2c2c2c"/><use href="#ch" x="33" y="959"/>
<rect x="46" y="950" width="127.500" height="18" rx="4" fill="#353535"/><path d="M114 950V968" stroke="#282828"/>
<text x="53.500" y="963">Playback</text><use href="#ch" x="107" y="959"/><text x="122.500" y="963">Keying</text><use href="#ch" x="166.500" y="959"/>
<text x="181" y="963">View</text><text x="221.400" y="963">Marker</text>
<rect x="711.700" y="950" width="17" height="18" rx="4" fill="#555"/><circle cx="720" cy="959" r="3.800" fill="#e4e4e4"/>
<rect x="736.700" y="950" width="117.300" height="18" rx="4" fill="#555"/>
<path d="M755 950V968M775 950V968M794 950V968M814 950V968M834 950V968" stroke="#3f3f3f"/>
<path d="M741 954V964H743V954ZM749 954L744 959L749 964Z" fill="#e8e8e8"/>
<path d="M757.500 959L762 953.500L766.500 959L762 964.500ZM767 959L771 955.500V962.500Z" fill="#e8e8e8"/>
<path d="M789 953L780 959L789 965Z" fill="#e8e8e8"/>
<path d="M799 953L808 959L799 965Z" fill="#e8e8e8"/>
<path d="M817 955.500L821 959L817 962.500ZM822 959L826.500 953.500L831 959L826.500 964.500Z" fill="#e8e8e8"/>
<path d="M840 954L845 959L840 964ZM847 954H849V964H847Z" fill="#e8e8e8"/>
<rect x="1296" y="950" width="73" height="18" rx="4" fill="#555"/><text x="1331.600" y="963" class="m">1</text>
<path d="M1380 950H1394.400V968H1380a4 4 0 0 1 -4 -4V954a4 4 0 0 1 4 -4Z" fill="#4b4b4b"/><circle cx="1385" cy="960" r="5" fill="none" stroke="#dcdcdc"/><path d="M1385 957V960.500H1388M1383 952.500H1387" fill="none" stroke="#dcdcdc"/>
<rect x="1394.400" y="950" width="88" height="18" fill="#555"/><path d="M1482.600 950H1562a4 4 0 0 1 4 4V964a4 4 0 0 1 -4 4H1482.600Z" fill="#555"/><path d="M1482.500 950V968" stroke="#3f3f3f"/>
<text x="1410.700" y="963">Start:</text><text x="1464.800" y="963" class="m">1</text><text x="1498.500" y="963">End:</text><text x="1532" y="963">250</text>
<g>
<text x="110.700" y="987" class="n">10</text><text x="169.700" y="987" class="n">20</text><text x="228.600" y="987" class="n">30</text><text x="287.600" y="987" class="n">40</text><text x="346.500" y="987" class="n">50</text><text x="405.500" y="987" class="n">60</text><text x="464.400" y="987" class="n">70</text><text x="523.400" y="987" class="n">80</text><text x="582.300" y="987" class="n">90</text><text x="641.300" y="987" class="n">100</text><text x="700.200" y="987" class="n">110</text><text x="759.200" y="987" class="n">120</text><text x="818.100" y="987" class="n">130</text><text x="877.100" y="987" class="n">140</text><text x="936" y="987" class="n">150</text><text x="995" y="987" class="n">160</text><text x="1053.900" y="987" class="n">170</text><text x="1112.900" y="987" class="n">180</text><text x="1171.800" y="987" class="n">190</text><text x="1230.800" y="987" class="n">200</text><text x="1289.700" y="987" class="n">210</text><text x="1348.700" y="987" class="n">220</text><text x="1407.600" y="987" class="n">230</text><text x="1466.600" y="987" class="n">240</text><text x="1525.500" y="987" class="n">250</text>
</g>
<rect x="58.200" y="991" width="1.300" height="27" fill="#5680c2"/>
<rect x="45.400" y="973" width="26" height="19" rx="4" fill="#5680c2"/><text x="58.700" y="987" class="m" style="fill:#fff">1</text>
<rect x="9" y="1008" width="1566.500" height="8" rx="4" fill="#666"/><circle cx="13" cy="1012" r="3.500" fill="#555" stroke="#777"/><circle cx="1572" cy="1012" r="3.500" fill="#555" stroke="#777"/>
<path d="M0 983L6 986V998L0 1001Z" fill="#2a2a2a"/><path d="M2 988L4.500 992L2 996" stroke="#9a9a9a" fill="none"/>
<path d="M1585 983L1578 986V998L1585 1001Z" fill="#2a2a2a"/><path d="M1583 988L1580 992L1583 996" stroke="#9a9a9a" fill="none"/>

<!-- STATUS -->
<rect x="0" y="1019" width="1920" height="21" fill="#2d2d2d"/>
<use href="#ms" x="17.500" y="1030"/><path d="M13 1029H17.500V1022.500" fill="#b5b5b5" stroke="#b5b5b5"/><text x="34.700" y="1033">Select</text>
<use href="#ms" x="253.600" y="1030"/><rect x="252.500" y="1024" width="2.500" height="5" fill="#b5b5b5"/><text x="270" y="1033">Center View to Mouse</text>
<use href="#ms" x="490" y="1030"/><path d="M490 1022.500H494.500V1029H490Z" fill="#b5b5b5"/>
<text x="1398" y="1033" textLength="492" lengthAdjust="spacingAndGlyphs">Collection | Verts:59,623 | Faces:59,252 | Tris:118,504 | Objects:0/12 | Mem: 43.5 MB | v2.80.75</text>
</svg>
</body></html>
